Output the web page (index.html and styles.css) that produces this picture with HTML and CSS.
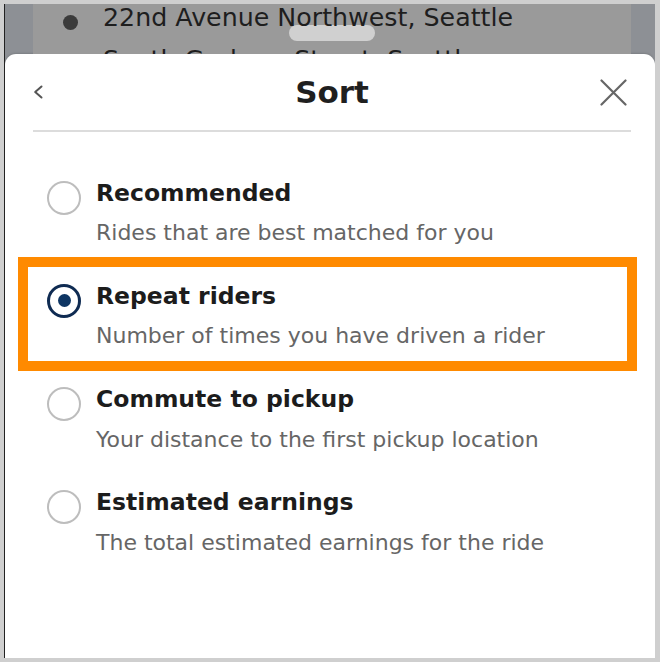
FILE: index.html
```html
<!DOCTYPE html>
<html lang="en">
<head>
<meta charset="utf-8">
<title>Sort</title>
<link rel="stylesheet" href="styles.css">
</head>
<body>
<div class="frame">
  <div class="backdrop">
    <div class="card">
      <div class="handle"></div>
      <ul class="stops">
        <li><span class="dot"></span><span>22nd Avenue Northwest, Seattle</span></li>
        <li><span class="dot"></span><span>South Graham Street, Seattle</span></li>
      </ul>
    </div>
  </div>
  <div class="sheet">
    <header class="sheet-head">
      <span class="back">
        <svg width="10" height="14" viewBox="0 0 10 14"><path d="M8.5 1.5 L2.2 7 L8.5 12.5" fill="none" stroke="#555" stroke-width="2" stroke-linecap="round" stroke-linejoin="round"/></svg>
      </span>
      <h1 class="title">Sort</h1>
      <span class="close">
        <svg width="27" height="27" viewBox="0 0 27 27"><path d="M1.5 1.5 L25.5 25.5 M25.5 1.5 L1.5 25.5" fill="none" stroke="#666" stroke-width="2.2" stroke-linecap="round"/></svg>
      </span>
    </header>
    <div class="divider"></div>
    <ul class="options">
      <li class="option">
        <span class="radio"></span>
        <div class="option-text">
          <div class="option-title">Recommended</div>
          <div class="option-desc">Rides that are best matched for you</div>
        </div>
      </li>
      <li class="option">
        <span class="radio on"></span>
        <div class="option-text">
          <div class="option-title">Repeat riders</div>
          <div class="option-desc">Number of times you have driven a rider</div>
        </div>
        <span class="highlight"></span>
      </li>
      <li class="option">
        <span class="radio"></span>
        <div class="option-text">
          <div class="option-title">Commute to pickup</div>
          <div class="option-desc">Your distance to the first pickup location</div>
        </div>
      </li>
      <li class="option">
        <span class="radio"></span>
        <div class="option-text">
          <div class="option-title">Estimated earnings</div>
          <div class="option-desc">The total estimated earnings for the ride</div>
        </div>
      </li>
    </ul>
  </div>
</div>
</body>
</html>
```
FILE: styles.css
```css
html, body {
  margin: 0;
  padding: 0;
  background: #cfcfcf;
}
body {
  font-family: "DejaVu Sans", sans-serif;
}
.frame {
  margin: 4px 0 0 4px;
  width: 651px;
  height: 654px;
  box-sizing: border-box;
  border-left: 1px solid #222;
  background: #8d9095;
  display: flex;
  flex-direction: column;
  overflow: hidden;
}
.backdrop {
  flex: none;
  height: 50px;
  padding: 0 24px 0 28px;
}
.card {
  position: relative;
  height: 100%;
  background: #9a9a9a;
  overflow: hidden;
}
.handle {
  position: absolute;
  left: 256px;
  top: 21px;
  width: 86px;
  height: 16px;
  border-radius: 8px;
  background: #d0d0d0;
}
.stops {
  position: relative;
  list-style: none;
  margin: -5.7px 0 0;
  padding: 0 0 0 30px;
}
.stops li {
  display: flex;
  height: 41.5px;
  font-size: 25.3px;
  line-height: 40px;
  color: #1e1e1e;
  white-space: nowrap;
}
.dot {
  flex: none;
  width: 15px;
  height: 15px;
  margin: 16.7px 25px 0 0;
  border-radius: 50%;
  background: #3b3b3b;
}
.sheet {
  flex: 1;
  background: #fff;
  border-radius: 11px 11px 0 0;
  padding: 0 24px 0 28px;
  box-shadow: 0 -1px 2px rgba(0, 0, 0, 0.12);
}
.sheet-head {
  height: 76px;
  display: grid;
  grid-template-columns: 1fr auto 1fr;
  align-items: center;
}
.back {
  justify-self: start;
  display: flex;
}
.close {
  justify-self: end;
  margin-right: 4px;
  display: flex;
}
.title {
  margin: 0;
  font-size: 31px;
  line-height: 40px;
  font-weight: 700;
  color: #1f1f1f;
}
.divider {
  height: 2px;
  background: #dcdcdc;
}
.options {
  list-style: none;
  margin: 0;
  padding: 45.6px 0 0 14px;
}
.option {
  position: relative;
  display: flex;
  gap: 15px;
  padding-bottom: 33.8px;
}
.radio {
  flex: none;
  width: 34px;
  height: 34px;
  margin-top: 3px;
  box-sizing: border-box;
  border: 2.5px solid #bdbdbd;
  border-radius: 50%;
}
.radio.on {
  border: 3px solid #0f2b52;
  display: grid;
  place-items: center;
}
.radio.on::after {
  content: "";
  width: 13px;
  height: 13px;
  border-radius: 50%;
  background: #0e3563;
}
.option-title {
  font-size: 23.5px;
  line-height: 30px;
  font-weight: 700;
  color: #1c1c1c;
  white-space: nowrap;
}
.option-desc {
  margin-top: 11.5px;
  font-size: 22px;
  line-height: 28px;
  color: #666;
  white-space: nowrap;
}
.highlight {
  position: absolute;
  left: -29px;
  top: -23.9px;
  width: 619px;
  height: 114px;
  box-sizing: border-box;
  border: 10px solid #ff8a00;
  pointer-events: none;
}
```
